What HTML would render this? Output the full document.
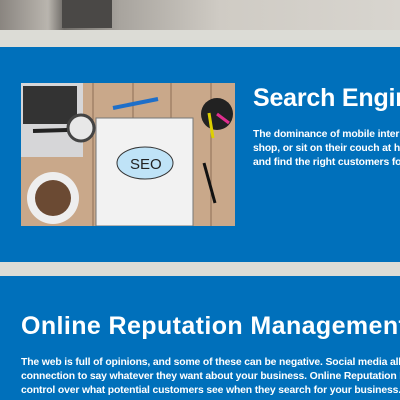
<!DOCTYPE html>
<html style="overflow:hidden;width:400px;height:400px"><head><style>
*{margin:0;padding:0;box-sizing:border-box}
body{width:400px;height:400px;overflow:hidden;background:#0070bb;font-family:"Liberation Sans",sans-serif;color:#fff;position:relative}
.abs{position:absolute}
h1{position:absolute;font-weight:bold;white-space:nowrap}
p{position:absolute;white-space:nowrap;font-size:10.4px;line-height:14px;font-weight:bold;letter-spacing:-0.15px}
.clip{position:absolute;overflow:hidden;right:0}
</style></head><body>
<div class="abs" style="left:0;top:0;width:400px;height:30px;background:linear-gradient(90deg,#8a8580 0,#b9b5ae 12%,#6d6a66 16%,#a8a49e 30%,#cfcbc4 55%,#d8d5cf 100%)"></div>
<div class="abs" style="left:62px;top:0;width:50px;height:28px;background:#4a4846"></div>
<div class="abs" style="left:0;top:30px;width:400px;height:17px;background:#dcdcd6"></div>
<div class="abs" style="left:0;top:262px;width:400px;height:14px;background:#dcdcd6"></div>

<svg class="abs" style="left:21px;top:83px" width="214" height="143" viewBox="0 0 214 143">
<rect width="214" height="143" fill="#c9a88a"/>
<g stroke="#8d6e55" stroke-width="1"><line x1="72" y1="0" x2="72" y2="143"/><line x1="112" y1="0" x2="112" y2="143"/><line x1="150" y1="0" x2="150" y2="143"/><line x1="190" y1="0" x2="190" y2="143"/></g>
<rect x="0" y="0" width="62" height="74" fill="#d6d6d8"/>
<rect x="2" y="3" width="54" height="38" fill="#333"/>
<circle cx="60" cy="45" r="13" fill="#e8e8e8" stroke="#444" stroke-width="3"/>
<line x1="46" y1="47" x2="12" y2="48" stroke="#222" stroke-width="4"/>
<circle cx="32" cy="115" r="26" fill="#eee"/>
<circle cx="32" cy="115" r="18" fill="#6b4a33"/>
<rect x="75" y="35" width="97" height="108" fill="#f2f2f2" stroke="#777"/>
<ellipse cx="124" cy="80" rx="28" ry="16" fill="#bfe3f7" stroke="#333"/>
<text x="109" y="86" font-size="15" fill="#222" font-family="Liberation Sans">SEO</text>
<line x1="92" y1="25" x2="137" y2="16" stroke="#1e6fc9" stroke-width="4"/>
<circle cx="196" cy="31" r="16" fill="#222"/>
<line x1="196" y1="31" x2="208" y2="40" stroke="#e02e8e" stroke-width="3"/>
<line x1="188" y1="30" x2="192" y2="55" stroke="#ddd000" stroke-width="3"/>
<line x1="183" y1="80" x2="194" y2="120" stroke="#111" stroke-width="3"/>
</svg>

<div class="clip" style="left:253px;top:80px;height:100px">
<h1 style="left:0;top:4px;font-size:25px;letter-spacing:-0.2px">Search Engine Optimization</h1>
<p style="left:0;top:48px">The dominance of mobile internet use means people<br>shop, or sit on their couch at home and search<br>and find the right customers for your business.</p>
</div>

<div class="clip" style="left:21px;top:300px;height:100px">
<h1 style="left:0;top:12px;font-size:25px;letter-spacing:0.4px">Online Reputation Management</h1>
<p style="left:0;top:56px">The web is full of opinions, and some of these can be negative. Social media allows<br>connection to say whatever they want about your business. Online Reputation Management<br>control over what potential customers see when they search for your business.</p>
</div>
</body></html>
